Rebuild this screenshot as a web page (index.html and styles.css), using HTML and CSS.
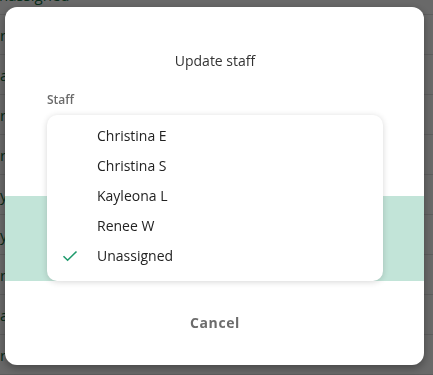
FILE: index.html
```html
<!DOCTYPE html>
<html lang="en">
<head>
  <meta charset="UTF-8">
  <meta name="viewport" content="width=device-width, initial-scale=1.0">
  <title>Update staff</title>
  <link rel="stylesheet" href="styles.css">
</head>
<body>
  <div class="page">
    <div class="row first">Unassigned</div>
    <div class="row">rachel</div>
    <div class="row">anna</div>
    <div class="row">rob</div>
    <div class="row">ruth</div>
    <div class="row">yvonne</div>
    <div class="row">yara</div>
    <div class="row">rita</div>
    <div class="row">amy</div>
    <div class="row">rose</div>
  </div>

  <div class="backdrop"></div>

  <div class="dialog">
    <div class="band"></div>
    <h2 class="dialog-title">Update staff</h2>
    <label class="field-label">Staff</label>
    <div class="field">
      <ul class="menu">
        <li class="menu-item">Christina E</li>
        <li class="menu-item">Christina S</li>
        <li class="menu-item">Kayleona L</li>
        <li class="menu-item">Renee W</li>
        <li class="menu-item selected">
          <svg class="check" width="16" height="12" viewBox="0 0 16 12">
            <path d="M1.5 6.2 L5.6 10.2 L14.5 1.5" fill="none" stroke="#1e9a6c" stroke-width="1.6"/>
          </svg>
          Unassigned
        </li>
      </ul>
    </div>
    <div class="dialog-footer">
      <button class="cancel">Cancel</button>
    </div>
  </div>
</body>
</html>
```

FILE: styles.css
```css
* {
  box-sizing: border-box;
}

body {
  margin: 0;
  font-family: "Open Sans", "Noto Sans", sans-serif;
  background: #fff;
  overflow: hidden;
}

.page {
  margin-top: -25px;
}

.row {
  height: 40px;
  line-height: 40px;
  padding-left: 0;
  border-bottom: 1px solid #e2e2e2;
  color: #0f6b3d;
  font-size: 15px;
}

.row.first {
  text-indent: -12px;
}

.backdrop {
  position: fixed;
  inset: 0;
  background: rgba(0, 0, 0, 0.59);
}

.dialog {
  position: fixed;
  left: 5px;
  top: 7px;
  width: 419px;
  height: 358px;
  background: #fff;
  border-radius: 12px;
  box-shadow: 0 3px 10px rgba(0, 0, 0, 0.35);
  padding: 44px 41px 0 42px;
  display: flex;
  flex-direction: column;
}

.band {
  position: absolute;
  left: 0;
  right: 0;
  top: 189px;
  height: 85px;
  background: #c2e4d8;
}

.dialog-title {
  margin: 0;
  font-size: 14px;
  font-weight: normal;
  line-height: 20px;
  text-align: center;
  color: #333;
}

.field-label {
  margin-top: 22px;
  font-size: 12px;
  font-weight: 600;
  line-height: 14px;
  color: #6a6a6a;
}

.field {
  position: relative;
  height: 174px;
}

.menu {
  position: absolute;
  top: 8px;
  left: 0;
  right: 0;
  margin: 0;
  padding: 6px 0 10px;
  list-style: none;
  background: #fff;
  border-radius: 10px;
  box-shadow: 0 1px 6px rgba(0, 0, 0, 0.16);
}

.menu-item {
  position: relative;
  height: 30px;
  line-height: 30px;
  padding-left: 50px;
  font-size: 14px;
  color: #222;
}

.check {
  position: absolute;
  left: 15px;
  top: 9px;
}

.dialog-footer {
  display: flex;
  justify-content: center;
  padding-top: 21px;
}

.cancel {
  border: none;
  background: none;
  font-family: inherit;
  font-size: 14px;
  font-weight: 700;
  letter-spacing: 0.6px;
  color: #6c6c6c;
  height: 40px;
  padding: 0 16px;
}
```
